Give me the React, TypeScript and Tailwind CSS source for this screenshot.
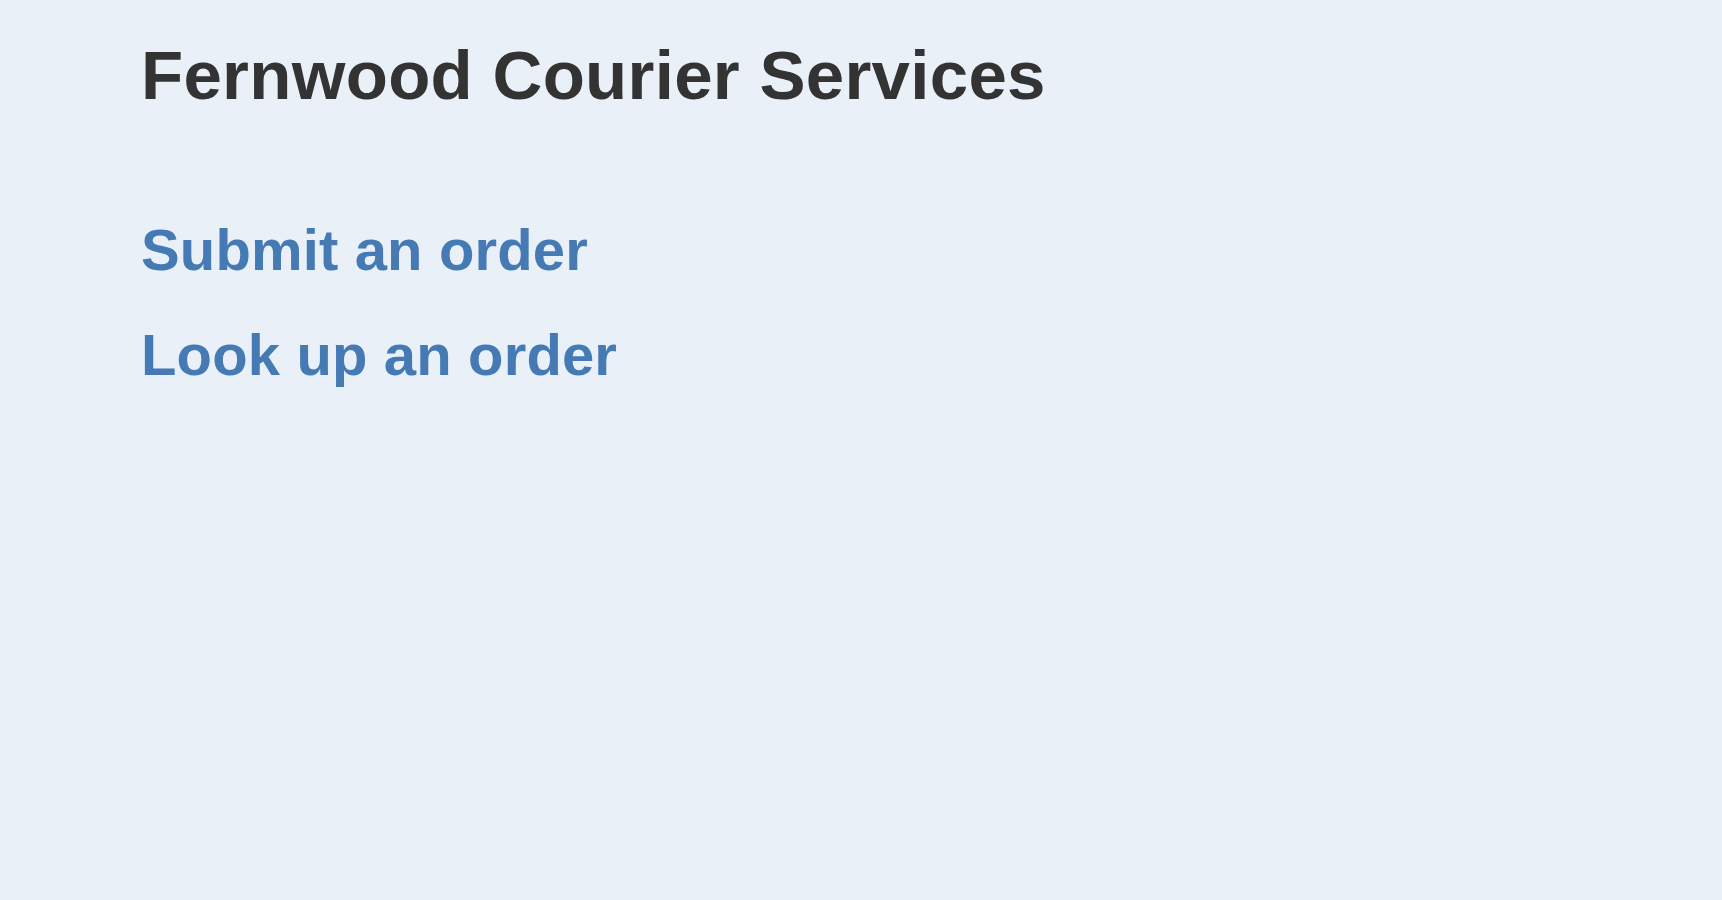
const links = [
  { href: "#submit", label: "Submit an order" },
  { href: "#lookup", label: "Look up an order" },
];

export default function App() {
  return (
    <main className="min-h-screen bg-[#e9f0f8] font-['Liberation_Sans',Arial,sans-serif]">
      <div className="pl-[141px] pt-9">
        <h1 className="text-[69px] leading-[80px] font-bold tracking-[0.3px] text-[#333333]">
          Fernwood Courier Services
        </h1>

        <nav className="mt-[102px] flex flex-col items-start gap-[41px]">
          {links.map((link) => (
            <a
              className="text-[58px] leading-[64px] font-bold tracking-[0.15px] text-[#467ab4] hover:underline"
              href={link.href}
              key={link.href}
            >
              {link.label}
            </a>
          ))}
        </nav>
      </div>
    </main>
  );
}
